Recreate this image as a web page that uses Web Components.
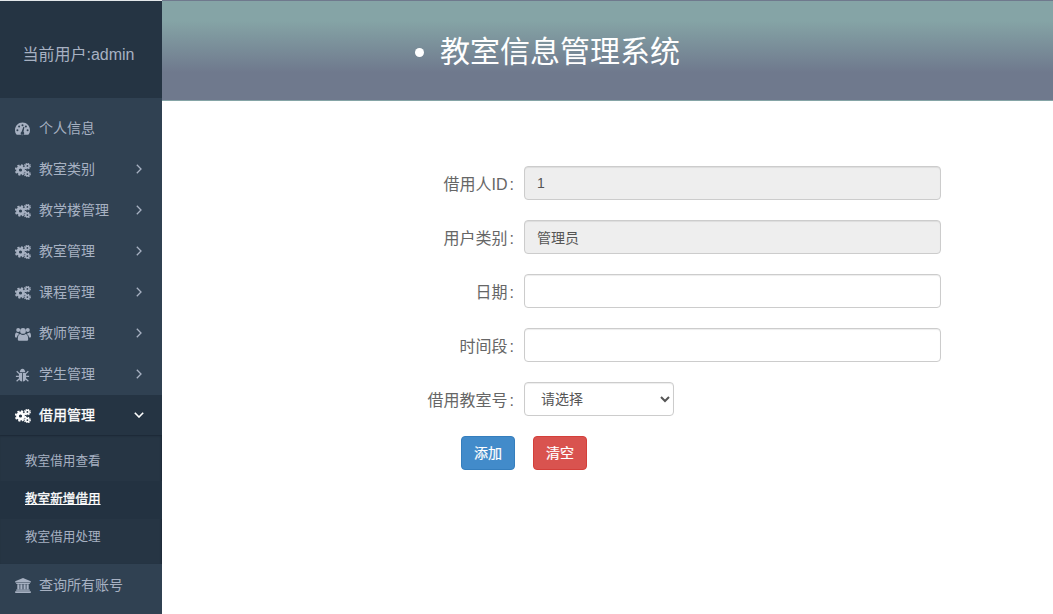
<!DOCTYPE html>
<html lang="zh"><head><meta charset="utf-8"><title>教室信息管理系统</title>
<style>
html,body{margin:0;height:100%;background:#fff}
body{font-family:"Liberation Sans","Noto Sans CJK SC",sans-serif;overflow:hidden}
</style></head><body>
<app-shell>
  <side-nav slot="nav" user="当前用户:admin">
    <nav-item icon="gauge">个人信息</nav-item>
    <nav-item icon="gears" arrow>教室类别</nav-item>
    <nav-item icon="gears" arrow>教学楼管理</nav-item>
    <nav-item icon="gears" arrow>教室管理</nav-item>
    <nav-item icon="gears" arrow>课程管理</nav-item>
    <nav-item icon="users" arrow>教师管理</nav-item>
    <nav-item icon="bug" arrow>学生管理</nav-item>
    <nav-item icon="gears" arrow open>借用管理</nav-item>
    <sub-menu>
      <sub-item>教室借用查看</sub-item>
      <sub-item current>教室新增借用</sub-item>
      <sub-item>教室借用处理</sub-item>
    </sub-menu>
    <nav-item icon="bank">查询所有账号</nav-item>
  </side-nav>
  <page-header slot="head">教室信息管理系统</page-header>
  <form-panel>
    <form-row label="借用人ID"><text-box value="1" disabled></text-box></form-row>
    <form-row label="用户类别"><text-box value="管理员" disabled></text-box></form-row>
    <form-row label="日期"><text-box></text-box></form-row>
    <form-row label="时间段"><text-box></text-box></form-row>
    <form-row label="借用教室号"><select-box>请选择</select-box></form-row>
    <form-actions>
      <action-button tone="primary">添加</action-button>
      <action-button tone="danger">清空</action-button>
    </form-actions>
  </form-panel>
</app-shell>
<script>
const ICONS={
gauge:`<svg viewBox="0 0 16 14" width="16" height="14"><path fill="currentColor" fill-rule="evenodd" d="M7.500.6C3.300.6 0 4 0 8.200c0 1.500.4 2.900 1.200 4.100.2.300.5.400.8.400h11c.3 0 .6-.1.800-.4.800-1.200 1.200-2.600 1.200-4.100C15 4 11.700.6 7.500.6zM2.400 9.200a1 1 0 1 1 0-2 1 1 0 0 1 0 2zm1.700-3.800a1 1 0 1 1 0-2 1 1 0 0 1 0 2zm3.400-1.200a1 1 0 1 1 0-2 1 1 0 0 1 0 2zm1.700 6.800a1.800 1.800 0 1 1-2.600-1.300L8.400 4.700l1 .3-.9 4.800c.3.300.6.700.7 1.200zm1.700-5.600a1 1 0 1 1 0-2 1 1 0 0 1 0 2zm1.700 3.800a1 1 0 1 1 0-2 1 1 0 0 1 0 2z"/></svg>`,
gears:`<svg viewBox="0 0 16 14" width="16" height="14" fill="none" stroke="currentColor"><circle cx="5.500" cy="7" r="3" stroke-width="2.800"/><circle cx="5.500" cy="7" r="4.800" stroke-width="1.800" stroke-dasharray="2.100 1.670"/><circle cx="12.400" cy="2.900" r="1.700" stroke-width="1.600"/><circle cx="12.400" cy="2.900" r="2.900" stroke-width="1.100" stroke-dasharray="1.300 1"/><circle cx="12.400" cy="11.100" r="1.700" stroke-width="1.600"/><circle cx="12.400" cy="11.100" r="2.900" stroke-width="1.100" stroke-dasharray="1.300 1"/></svg>`,
users:`<svg viewBox="0 0 16 14" width="16" height="14" fill="currentColor"><circle cx="8" cy="3.900" r="2.900"/><circle cx="3.200" cy="3" r="2"/><circle cx="12.800" cy="3" r="2"/><path d="M3.700 13.800c-.6-.2-.9-.6-.9-1.200 0-3 .6-5.300 2.500-5.500.8.600 1.700 1 2.700 1s1.900-.4 2.700-1c1.900.2 2.500 2.500 2.500 5.500 0 .6-.3 1-.9 1.200z"/><path d="M0 8.900C0 6.800.5 5.600 1.700 5.400c.5.400 1.100.6 1.700.6.100.500.400 1 .7 1.300-1.400.5-2 1.700-2.100 3.300H1C.3 10.600 0 9.900 0 8.900zM16 8.900c0-2.100-.5-3.300-1.700-3.500-.5.400-1.100.6-1.700.6-.1.500-.4 1-.7 1.300 1.400.5 2 1.700 2.100 3.300h1c.7 0 1-.7 1-1.700z"/></svg>`,
bug:`<svg viewBox="0 0 16 14" width="16" height="14" fill="currentColor"><path d="M4.700 4.300C4.900 2.400 6 .8 7.500.8s2.600 1.600 2.800 3.500z"/><path d="M4.200 5h2.900v8.600c-1.800-.2-3.200-1.700-3.200-3.900V6zM7.900 5h2.900l.3 1v3.700c0 2.200-1.400 3.700-3.200 3.900z"/><path fill="none" stroke="currentColor" stroke-width="1.200" d="M1.700 3.300l2.500 2.300M13.300 3.300l-2.500 2.300M.9 8.300h3M14.100 8.300h-3M1.600 13.300l2.800-2.600M13.400 13.300l-2.800-2.600"/></svg>`,
bank:`<svg viewBox="0 0 16 15" width="16" height="15" fill="currentColor"><path d="M8 0L.2 3.200V4.400h15.600V3.200z"/><path d="M1.200 4.900h13.600v1H1.200zM2.300 6.300h2.200v4.900H2.300zM5.300 6.300h2.200v4.900H5.300zM8.500 6.300h2.200v4.900H8.500zM11.500 6.300h2.200v4.900h-2.200zM1.200 11.600h13.600v1.100H1.200zM.2 13.200h15.600V15H.2z"/></svg>`
};
const RIGHT=`<svg viewBox="0 0 6 10" width="6" height="10" fill="none" stroke="currentColor" stroke-width="1.300"><path d="M.8.800L5 5 .8 9.200"/></svg>`;
const DOWN=`<svg viewBox="0 0 10 6" width="10" height="6" fill="none" stroke="currentColor" stroke-width="1.600"><path d="M.8.800L5 5 9.200.800"/></svg>`;

function def(name,fn){
  customElements.define(name,class extends HTMLElement{
    connectedCallback(){ if(this.shadowRoot)return; this.attachShadow({mode:"open"}).innerHTML=fn(this); }
  });
}
def("app-shell",()=>`<style>
:host{display:grid;grid-template-columns:162px 1fr;grid-template-rows:101px 1fr;height:100vh;min-height:614px}
.n{grid-row:1/3;display:flex;min-height:0}.c{min-width:0}
</style><div class="n"><slot name="nav"></slot></div><div><slot name="head"></slot></div><div class="c"><slot></slot></div>`);
def("side-nav",h=>`<style>
:host{display:flex;flex-direction:column;width:162px;background:#304152;color:#a7b1c2;font-size:14px;border-top:1px solid #e4e7ea;box-sizing:border-box}
.u{height:97px;box-sizing:border-box;padding:6px 5px 0 0;flex:none;background:#253443;display:flex;align-items:center;justify-content:center;font-size:16px;color:#a7b1c2}
.m{padding:9px 0;display:flex;flex-direction:column}
</style><div class="u">${h.getAttribute("user")}</div><div class="m"><slot></slot></div>`);
def("nav-item",h=>{
  const open=h.hasAttribute("open"),arrow=h.hasAttribute("arrow");
  return `<style>
:host{display:flex;align-items:center;box-sizing:border-box;height:${open?40:41}px;margin-top:${open?1:0}px;padding-left:15px;padding-right:20px;color:${open?"#fff":"#a7b1c2"};background:${open?"#253443":"transparent"}}
.i{width:24px;flex:none;display:flex;align-items:center;margin-top:2px;color:${open?"#fff":"#a7b1c2"}}
.t{flex:1;white-space:nowrap;padding-bottom:${open?3:2}px;${open?"-webkit-text-stroke:.3px #fff":""}}
.a{display:flex;align-items:center;${open?"margin-right:-2px":""}}
</style><span class="i">${ICONS[h.getAttribute("icon")]}</span><span class="t"><slot></slot></span>${arrow?`<span class="a">${open?DOWN:RIGHT}</span>`:""}`;
});
def("sub-menu",()=>`<style>
:host{display:block;background:#263544;padding:8px 0 7px;box-shadow:inset 0 2px 2px -1px #1c2835,inset -2px 0 2px -1px #1f2b38}
</style><slot></slot>`);
def("sub-item",h=>{
  const c=h.hasAttribute("current");
  return `<style>
:host{display:flex;align-items:center;box-sizing:border-box;height:38px;padding:0 2px 6px 25px;font-size:12.6px;color:${c?"#fff":"#a7b1c2"};background:${c?"#233241":"transparent"};text-decoration:${c?"underline":"none"};${c?"-webkit-text-stroke:.3px #fff":""}}
</style><slot></slot>`;
});
def("page-header",()=>`<style>
:host{display:block;height:101px;box-sizing:border-box;border:1px solid transparent;border-width:1px 0;background:linear-gradient(#85a4a6 0,#85a4a6 20%,#6f798d 72%,#6f798d 100%);color:#fff;font-size:30px}
ul{margin:0;padding:0 0 0 278px;height:100%;display:flex;align-items:center}
li{display:list-item;line-height:1;margin-top:3px}
</style><ul><li><slot></slot></li></ul>`);
def("form-panel",()=>`<style>
:host{display:flex;flex-direction:column;gap:20px;padding:65px 0 0 252px}
</style><slot></slot>`);
def("form-row",h=>`<style>
:host{display:grid;grid-template-columns:100px 417px;column-gap:10px;align-items:center}
label{text-align:right;font-size:16px;color:#666;white-space:nowrap}
i{font-style:normal;margin-left:2px}
</style><label>${h.getAttribute("label")}<i>:</i></label><div><slot></slot></div>`);
def("text-box",h=>{
  const d=h.hasAttribute("disabled"),v=h.getAttribute("value")||"";
  return `<style>
:host{display:block}
input{display:block;box-sizing:border-box;width:100%;height:34px;padding:0 12px;border:1px solid #ccc;border-radius:4px;font:14px "Liberation Sans","Noto Sans CJK SC",sans-serif;color:#555;background:${d?"#eee":"#fff"};box-shadow:inset 0 1px 1px rgba(0,0,0,.075);opacity:1;margin:0;outline:0;-webkit-text-fill-color:#555}
</style><input value="${v}" ${d?"disabled":""}>`;
});
def("select-box",h=>`<style>
:host{display:block;width:150px}
select{display:block;box-sizing:border-box;width:100%;height:34px;padding:0 12px;border:1px solid #ccc;border-radius:4px;font:14px "Liberation Sans","Noto Sans CJK SC",sans-serif;color:#555;background-color:#fff;box-shadow:inset 0 1px 1px rgba(0,0,0,.075);margin:0;outline:0}
</style><select><option>${h.textContent}</option></select>`);
def("form-actions",()=>`<style>
:host{display:flex;gap:18px;padding-left:47px}
</style><slot></slot>`);
def("action-button",h=>{
  const p=h.getAttribute("tone")==="primary";
  return `<style>
:host{display:block}
button{display:block;box-sizing:border-box;width:54px;height:34px;padding:0 0 2px;border:1px solid ${p?"#357ebd":"#d43f3a"};border-radius:4px;background:${p?"#428bca":"#d9534f"};color:#fff;font:14px "Liberation Sans","Noto Sans CJK SC",sans-serif;-webkit-text-stroke:.2px #fff}
</style><button type="button"><slot></slot></button>`;
});
</script>
</body></html>
